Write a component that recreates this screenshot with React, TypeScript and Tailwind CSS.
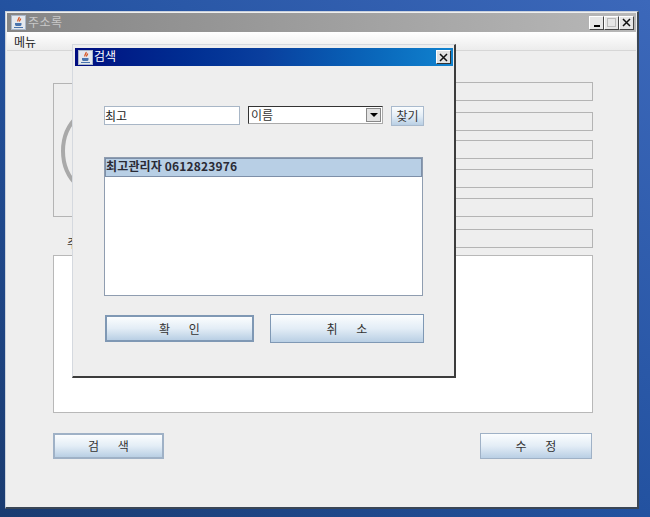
import React from "react";

const font = { fontFamily: '"Noto Sans CJK KR", "Liberation Sans", sans-serif' };

function JavaIcon() {
  return (
    <span className="w-[15px] h-[15px] bg-[#e4e8ee] border border-[#a9b6c8] flex items-center justify-center shrink-0">
      <svg width="13" height="13" viewBox="0 0 13 13">
        <path d="M7 1c1 1.5-2 2.5-1 4.5M8.5 2.5c.5 1-1.5 2-.7 3" stroke="#d9541e" strokeWidth="1.3" fill="none" />
        <path d="M3 7h6.5v1.5c0 1-1 1.5-2 1.5H5c-1 0-2-.5-2-1.5z" fill="#4a74ad" />
        <path d="M2 11h9v1H2z" fill="#4a74ad" />
      </svg>
    </span>
  );
}

function Field({ className }: { className: string }) {
  return <div className={`h-[19px] w-full bg-[#eeeeee] border border-[#b4b4b4] ${className}`} />;
}

function GradButton({ children, className }: { children: React.ReactNode; className: string }) {
  return (
    <div className={`flex items-center justify-center bg-gradient-to-b from-[#fbfdfe] via-[#e3edf6] to-[#b9cfe4] text-[#333] text-[12px] whitespace-pre [word-spacing:16px] ${className}`}>
      {children}
    </div>
  );
}

function WinBtn({ children }: { children: React.ReactNode }) {
  return (
    <div className="w-[15px] h-[14px] bg-[#e6e6e6] border-t border-l border-t-white border-l-white border-r border-b border-r-[#444] border-b-[#444] flex items-center justify-center">
      {children}
    </div>
  );
}

export default function App() {
  return (
    <div
      style={font}
      className="relative w-[650px] h-[517px] overflow-hidden bg-gradient-to-tr from-[#1a3b70] via-[#2352a0] to-[#3c68ba] pl-[5px] pr-[11px] pt-[11px] pb-[8px]"
    >
      {/* Main window */}
      <div className="h-[498px] bg-[#eeeeee] border border-[#c8d0dc] border-r-[#3a4656] border-b-[#3a4656] border-r-2 border-b-2 px-[1px] flex flex-col">
        <div className="h-[19px] mt-[1px] bg-gradient-to-r from-[#858585] to-[#b8b8b8] flex items-center pl-[4px] pr-[2px]">
          <JavaIcon />
          <span className="ml-[2px] -mt-[2px] text-[12px] text-[#c8c8c8] tracking-[0.5px]">주소록</span>
          <div className="ml-auto flex">
            <WinBtn>
              <span className="w-[6px] h-[2px] bg-black mt-[7px]" />
            </WinBtn>
            <WinBtn>
              <span className="w-[9px] h-[9px] border border-[#bbb]" />
            </WinBtn>
            <WinBtn>
              <svg width="9" height="9" viewBox="0 0 9 9">
                <path d="M1 1l7 7M8 1l-7 7" stroke="#111" strokeWidth="1.5" />
              </svg>
            </WinBtn>
          </div>
        </div>
        <div className="h-[19px] bg-gradient-to-b from-white to-[#ececec] border-b border-[#d6d6d6] pl-[7px] text-[12px] text-[#222] leading-[19px]">
          메뉴
        </div>
        <div className="flex-1 pl-[46px] pr-[43px] pt-[31px] flex flex-col">
          <div className="flex h-[173px] gap-[14px]">
            <div className="w-[150px] flex flex-col">
              <div className="h-[134px] mt-[1px] border border-[#b4b4b4] bg-[#eeeeee] overflow-hidden">
                <svg width="40" height="132" viewBox="0 0 40 132">
                  <path d="M24 32C4 50 4 84 24 102" stroke="#a9a9a9" strokeWidth="4" fill="none" />
                </svg>
              </div>
              <div className="mt-[20px] pl-[14px] text-[12px] leading-[12px] text-[#333]">주소</div>
            </div>
            <div className="flex-1 flex flex-col">
              <Field className="" />
              <Field className="mt-[11px]" />
              <Field className="mt-[9px]" />
              <Field className="mt-[10px]" />
              <Field className="mt-[10px]" />
              <Field className="mt-[12px]" />
            </div>
          </div>
          <div className="h-[158px] bg-white border border-[#b8b8b8]" />
          <div className="flex justify-between mt-[20px] pr-[1px]">
            <GradButton className="w-[111px] h-[26px] border-2 border-[#9fb1c6]">검 색</GradButton>
            <GradButton className="w-[112px] h-[26px] border border-[#9fb1c6]">수 정</GradButton>
          </div>
        </div>
      </div>

      {/* Dialog */}
      <div className="absolute left-[72px] top-[44px] w-[384px] h-[334px] bg-[#eeeeee] border border-[#d5d9df] border-r-[#3c3c3c] border-b-[#3c3c3c] border-r-2 border-b-2 pl-[2px] pr-[1px] pt-[3px]">
        <div className="h-[18px] bg-gradient-to-r from-[#000c80] via-[#0a3f9e] to-[#1183cf] flex items-center pl-[3px] pr-[2px]">
          <JavaIcon />
          <span className="ml-[1px] -mt-[2px] text-[12px] text-white">검색</span>
          <div className="ml-auto w-[15px] h-[14px] bg-[#e2e2e2] border-t border-l border-white border-r border-b border-r-[#333] border-b-[#333] flex items-center justify-center">
            <svg width="9" height="9" viewBox="0 0 9 9">
              <path d="M1 1l7 7M8 1l-7 7" stroke="#111" strokeWidth="1.5" />
            </svg>
          </div>
        </div>
        <div className="pl-[29px] pr-[29px]">
          <div className="flex mt-[40px] h-[21px]">
            <div className="w-[136px] h-[19px] bg-white border border-[#a8b6c6] text-[12px] leading-[17px] text-[#222]">
              최고
            </div>
            <div className="ml-[8px] w-[135px] h-[18px] bg-white border border-[#333] border-r-[#aaa] border-b-[#aaa] flex items-center text-[12px] pl-[2px] pr-[1px] text-[#333]">
              <span>이름</span>
              <div className="ml-auto w-[15px] h-[14px] bg-[#e2e2e2] border border-[#888] flex items-center justify-center">
                <span className="w-0 h-0 border-l-[4px] border-r-[4px] border-t-[4px] border-l-transparent border-r-transparent border-t-black" />
              </div>
            </div>
            <GradButton className="ml-[8px] w-[33px] h-[20px] border border-[#a9bacd]">찾기</GradButton>
          </div>
          <div className="mt-[30px] w-[319px] h-[139px] bg-white border border-[#8f9db0]">
            <div className="h-[19px] bg-[#b8cfe5] border border-[#7d8fa8] text-[12px] font-bold leading-[14px] tracking-[0.15px] text-[#2a2a35] whitespace-nowrap">
              최고관리자 0612823976
            </div>
          </div>
          <div className="flex mt-[18px] items-center">
            <GradButton className="ml-[1px] w-[149px] h-[27px] border-2 border-[#7f98b4]">확 인</GradButton>
            <GradButton className="ml-[16px] w-[154px] h-[29px] border border-[#7f98b4]">취 소</GradButton>
          </div>
        </div>
      </div>
    </div>
  );
}
